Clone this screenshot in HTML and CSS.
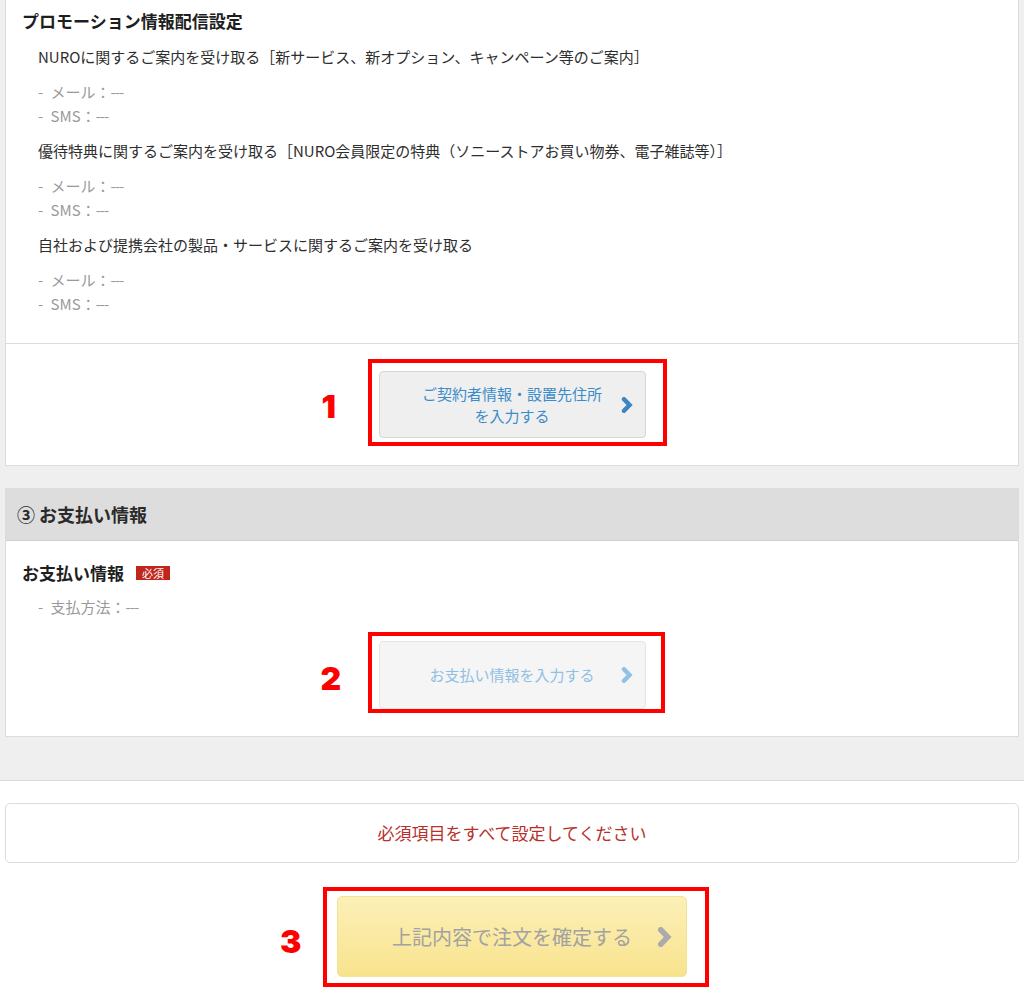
FILE: index.html
```html
<!DOCTYPE html>
<html lang="ja">
<head>
<meta charset="utf-8">
<title>お申し込み内容の確認</title>
<link rel="stylesheet" href="styles.css">
</head>
<body>
<div class="gray-area">
  <section class="card card-first">
    <div class="card-body">
      <h3 class="block-title">プロモーション情報配信設定</h3>
      <div class="pref">
        <p class="pref-title">NUROに関するご案内を受け取る［新サービス、新オプション、キャンペーン等のご案内］</p>
        <ul class="pref-list">
          <li>- メール：<span class="nil">---</span></li>
          <li>- SMS：<span class="nil">---</span></li>
        </ul>
      </div>
      <div class="pref">
        <p class="pref-title">優待特典に関するご案内を受け取る［NURO会員限定の特典（ソニーストアお買い物券、電子雑誌等）］</p>
        <ul class="pref-list">
          <li>- メール：<span class="nil">---</span></li>
          <li>- SMS：<span class="nil">---</span></li>
        </ul>
      </div>
      <div class="pref">
        <p class="pref-title">自社および提携会社の製品・サービスに関するご案内を受け取る</p>
        <ul class="pref-list">
          <li>- メール：<span class="nil">---</span></li>
          <li>- SMS：<span class="nil">---</span></li>
        </ul>
      </div>
    </div>
    <div class="card-action bordered">
      <div class="annot annot-1">
        <button class="btn-step" type="button">
          <span class="btn-label">ご契約者情報・設置先住所<br>を入力する</span>
          <svg class="chev" viewBox="0 0 12 16" aria-hidden="true"><path d="M3 2.2 L8.6 8 L3 13.8"/></svg>
        </button>
        <span class="annot-box"></span>
        <span class="annot-num">1</span>
      </div>
    </div>
  </section>

  <section class="card card-pay">
    <h2 class="card-header">③ お支払い情報</h2>
    <div class="card-body pay-body">
      <h3 class="block-title">お支払い情報<span class="badge">必須</span></h3>
      <ul class="pref-list">
        <li>- 支払方法：<span class="nil">---</span></li>
      </ul>
    </div>
    <div class="card-action pay-action">
      <div class="annot annot-2">
        <button class="btn-step disabled" type="button">
          <span class="btn-label">お支払い情報を入力する</span>
          <svg class="chev" viewBox="0 0 12 16" aria-hidden="true"><path d="M3 2.2 L8.6 8 L3 13.8"/></svg>
        </button>
        <span class="annot-box"></span>
        <span class="annot-num">2</span>
      </div>
    </div>
  </section>
</div>

<div class="footer-area">
  <div class="notice">必須項目をすべて設定してください</div>
  <div class="confirm-row">
    <div class="annot annot-3">
      <button class="btn-confirm" type="button">
        <span class="btn-label">上記内容で注文を確定する</span>
        <svg class="chev chev-lg" viewBox="0 0 12 16" aria-hidden="true"><path d="M3 2.2 L8.6 8 L3 13.8"/></svg>
      </button>
      <span class="annot-box"></span>
      <span class="annot-num">3</span>
    </div>
  </div>
</div>
</body>
</html>
```

FILE: styles.css
```css
* { box-sizing: border-box; }

html, body {
  margin: 0;
  padding: 0;
}

body {
  background: #ffffff;
  font-family: "Noto Sans CJK JP", "Noto Sans", sans-serif;
  color: #333333;
  font-size: 15px;
  line-height: 24px;
}

.gray-area {
  background: #efefef;
  padding: 0 5px 43px 5px;
  border-bottom: 1px solid #d8d8d8;
}

.card {
  background: #ffffff;
  border: 1px solid #dcdcdc;
}

.card-first {
  border-top: 0;
}

.card-pay {
  margin-top: 22px;
}

.card-body {
  padding: 9px 16px 27px 16px;
}

.block-title {
  margin: 0;
  font-size: 17px;
  line-height: 24px;
  font-weight: bold;
  color: #1e1e1e;
  display: flex;
  align-items: center;
}

.pref-title {
  margin: 11px 0 0 16px;
  font-size: 15px;
  line-height: 24px;
  color: #2e2e2e;
}

.pref:first-of-type .pref-title {
  margin-top: 12px;
}

.pref-list {
  list-style: none;
  margin: 11px 0 0 16px;
  padding: 0;
  color: #9a9a9a;
  font-size: 15px;
  line-height: 24px;
  word-spacing: 4px;
}

.nil {
  letter-spacing: -1px;
}

.card-action {
  display: flex;
  justify-content: center;
  padding: 27px 0;
}

.card-action.bordered {
  border-top: 1px solid #dcdcdc;
}

.card-header {
  margin: 0;
  height: 52px;
  padding-left: 11px;
  background: #dddddd;
  border-bottom: 1px solid #cfcfcf;
  font-size: 18px;
  line-height: 51px;
  font-weight: bold;
  color: #2a2a2a;
}

.pay-body {
  padding: 20px 16px 0 16px;
}

.pay-body .pref-list {
  margin-top: 10px;
}

.pay-action {
  padding: 22px 0 27px 0;
}

.badge {
  display: inline-block;
  margin-left: 12px;
  width: 34px;
  height: 14px;
  background: #c0261b;
  color: #ffffff;
  font-size: 11px;
  line-height: 14px;
  font-weight: normal;
  text-align: center;
  letter-spacing: 0;
}

/* step buttons */
.btn-step {
  display: grid;
  grid-template-columns: 20px 1fr 20px;
  align-items: center;
  width: 267px;
  height: 67px;
  padding: 0 12px;
  margin: 0;
  background: #efefef;
  border: 1px solid #d6d6d6;
  border-radius: 4px;
  font-family: inherit;
  font-size: 15px;
  line-height: 22px;
  color: #3b8cca;
  cursor: pointer;
}

.btn-step .btn-label {
  grid-column: 2;
  text-align: center;
}

.chev {
  fill: none;
  stroke-width: 4.4;
  stroke-linecap: round;
  stroke-linejoin: miter;
  stroke-miterlimit: 4;
}

.btn-step .chev {
  grid-column: 3;
  justify-self: end;
  width: 12px;
  height: 16px;
  stroke: #3a85c2;
}

.btn-step.disabled {
  height: 68px;
  background: #f5f5f5;
  border-color: #e4e4e4;
  color: #8fc0e3;
}

.btn-step.disabled .chev {
  stroke: #92c2e3;
}

/* footer */
.footer-area {
  padding: 22px 5px 15px 5px;
  background: #ffffff;
}

.notice {
  height: 60px;
  border: 1px solid #dcdcdc;
  border-radius: 5px;
  text-align: center;
  font-size: 17px;
  line-height: 58px;
  color: #b8302a;
}

.confirm-row {
  display: flex;
  justify-content: center;
  margin-top: 33px;
}

.btn-confirm {
  display: grid;
  grid-template-columns: 24px 1fr 24px;
  align-items: center;
  width: 350px;
  height: 81px;
  padding: 0 14px;
  margin: 0;
  background: linear-gradient(#fcf0b8, #f8e38d);
  border: 1px solid #f3e29a;
  border-radius: 5px;
  font-family: inherit;
  font-size: 20px;
  line-height: 28px;
  color: #a2a2a2;
  cursor: pointer;
}

.btn-confirm .btn-label {
  grid-column: 2;
  text-align: center;
}

.btn-confirm .chev {
  grid-column: 3;
  justify-self: end;
  stroke: #ababab;
}

.chev-lg {
  width: 15px;
  height: 20px;
}

/* red annotations drawn over the screenshot */
.annot {
  position: relative;
}

.annot-box {
  position: absolute;
  border: 4px solid #ff0000;
  pointer-events: none;
}

.annot-num {
  position: absolute;
  font-family: "Inter", "DejaVu Sans", sans-serif;
  font-weight: 900;
  font-size: 32px;
  line-height: 32px;
  color: #ff0000;
}

.annot-1 .annot-box { top: -12px; left: -11px; right: -21px; bottom: -8px; }
.annot-1 .annot-num { left: -57px; top: 20px; }

.annot-2 .annot-box { top: -9px; left: -11px; right: -19px; bottom: -4px; }
.annot-2 .annot-num { left: -58px; top: 22px; }

.annot-3 .annot-box { top: -9px; left: -14px; right: -22px; bottom: -10px; }
.annot-3 .annot-num { left: -57px; top: 30px; }
```
